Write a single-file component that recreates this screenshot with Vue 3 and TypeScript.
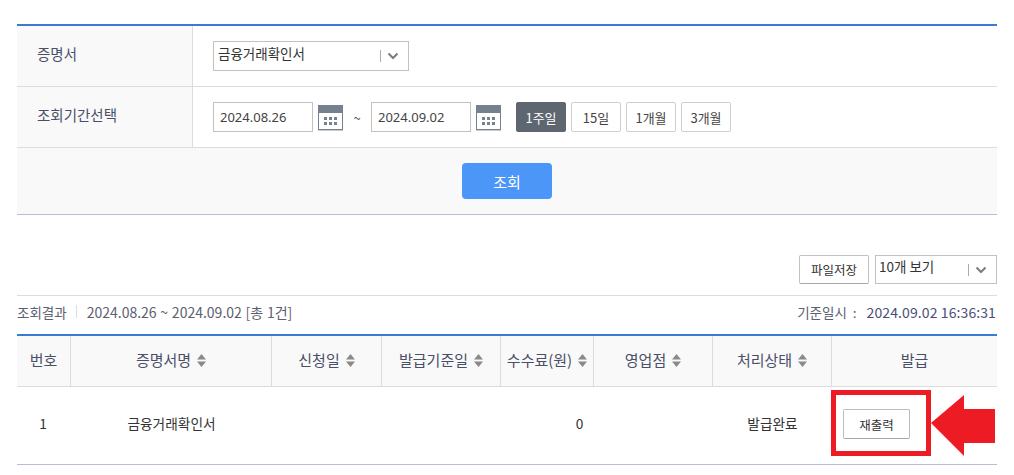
<script setup lang="ts">
interface Col { label: string; width: number; sort: boolean }
const cols: Col[] = [
  { label: '번호', width: 54, sort: false },
  { label: '증명서명', width: 201, sort: true },
  { label: '신청일', width: 110, sort: true },
  { label: '발급기준일', width: 119, sort: true },
  { label: '수수료(원)', width: 93, sort: true },
  { label: '영업점', width: 119, sort: true },
  { label: '처리상태', width: 119, sort: true },
  { label: '발급', width: 165, sort: false },
]
const periods = ['1주일', '15일', '1개월', '3개월']
</script>

<template>
  <main class="page">
    <section class="search">
      <div class="row">
        <div class="label">증명서</div>
        <div class="field">
          <div class="select cert"><span class="sel-text">금융거래확인서</span><i class="sep"></i>
            <svg class="chev" width="12" height="8" viewBox="0 0 12 8"><path d="M1.500 1.500 6 6l4.500-4.500" fill="none" stroke="#7d7d7d" stroke-width="2"/></svg>
          </div>
        </div>
      </div>
      <div class="row">
        <div class="label">조회기간선택</div>
        <div class="field">
          <div class="date">2024.08.26</div>
          <svg class="cal" width="25" height="25" viewBox="0 0 25 25"><rect x=".5" y=".5" width="24" height="24" fill="#fff" stroke="#76818f"/><rect width="25" height="8" fill="#76818f"/><path d="M6 12h3v3H6zm5 0h3v3h-3zm5 0h3v3h-3zM6 17h3v3H6zm5 0h3v3h-3zm5 0h3v3h-3z" fill="#76818f"/></svg>
          <span class="tilde">~</span>
          <div class="date">2024.09.02</div>
          <svg class="cal" width="25" height="25" viewBox="0 0 25 25"><rect x=".5" y=".5" width="24" height="24" fill="#fff" stroke="#76818f"/><rect width="25" height="8" fill="#76818f"/><path d="M6 12h3v3H6zm5 0h3v3h-3zm5 0h3v3h-3zM6 17h3v3H6zm5 0h3v3h-3zm5 0h3v3h-3z" fill="#76818f"/></svg>
          <div class="periods">
            <button v-for="(p, i) in periods" :key="p" class="period" :class="{ on: i === 0 }">{{ p }}</button>
          </div>
        </div>
      </div>
      <div class="foot"><button class="submit">조회</button></div>
    </section>

    <div class="tools">
      <button class="save">파일저장</button>
      <div class="select count"><span class="sel-text">10개 보기</span><i class="sep"></i>
        <svg class="chev" width="12" height="8" viewBox="0 0 12 8"><path d="M1.500 1.500 6 6l4.500-4.500" fill="none" stroke="#7d7d7d" stroke-width="2"/></svg>
      </div>
    </div>

    <div class="summary">
      <div class="sum-left"><span class="sum-title">조회결과</span><i class="sum-sep"></i><span class="range">2024.08.26 ~ 2024.09.02 [총 1건]</span></div>
      <div class="sum-right"><span class="sum-title when">기준일시 :</span><span class="stamp">2024.09.02 16:36:31</span></div>
    </div>

    <div class="table-wrap">
      <table>
        <colgroup><col v-for="c in cols" :key="c.label" :style="{ width: c.width + 'px' }" /></colgroup>
        <thead>
          <tr>
            <th v-for="c in cols" :key="c.label">{{ c.label }}<svg v-if="c.sort" class="sort" width="9" height="13" viewBox="0 0 9 13"><path d="M4.500 0 9 5.500H0zM0 7.500h9L4.500 13z" fill="#8a8a8a"/></svg></th>
          </tr>
        </thead>
        <tbody>
          <tr>
            <td class="num">1</td>
            <td>금융거래확인서</td>
            <td></td>
            <td></td>
            <td class="fee">0</td>
            <td></td>
            <td>발급완료</td>
            <td class="issue"><button class="reprint">재출력</button></td>
          </tr>
        </tbody>
      </table>
      <div class="mark"></div>
      <svg class="arrow" width="64" height="61" viewBox="0 0 64 61"><path d="M0 28 33 0v14h31v34H33v13z" fill="#ed1c24"/></svg>
    </div>
  </main>
</template>

<style>
body { margin: 0; background: #fff; }
</style>

<style scoped>
.page {
  width: 980px;
  margin-left: 17px;
  padding-top: 24px;
  font-family: "Noto Sans CJK KR", "Noto Sans", sans-serif;
  font-size: 13px;
  color: #333;
}
.search { border-top: 2px solid #3a7bd0; border-bottom: 1px solid #b8bdd6; }
.row { display: flex; height: 61px; border-bottom: 1px solid #dcdcdc; box-sizing: border-box; }
.label {
  width: 176px;
  box-sizing: border-box;
  padding: 0 0 6px 20px;
  display: flex;
  align-items: center;
  background: #f9f9f9;
  border-right: 1px solid #dcdcdc;
  color: #4a4f68;
  font-size: 14.5px;
}
.field { flex: 1; display: flex; align-items: center; padding-left: 20px; }
.select {
  display: flex;
  align-items: center;
  box-sizing: border-box;
  height: 30px;
  border: 1px solid #c2c2c2;
  background: #fff;
}
.cert { width: 196px; }
.count { width: 122px; }
.sel-text { flex: 1; padding: 0 0 7px 4px; font-size: 13.500px; color: #333; }
.count .sel-text { padding-left: 3px; }
.sep { width: 1px; height: 12px; background: #aaa; margin-right: 6px; }
.chev { margin-right: 9px; }
.date {
  box-sizing: border-box;
  width: 100px;
  height: 30px;
  border: 1px solid #c2c2c2;
  padding-left: 6px;
  display: flex;
  align-items: center;
  font-family: "Noto Sans", sans-serif;
  color: #444;
}
.cal { margin-left: 5px; filter: drop-shadow(0 1px 0 #ccc); }
.tilde { width: 28px; text-align: center; color: #555; }
.periods { display: flex; gap: 5px; margin-left: 15px; }
.period {
  box-sizing: border-box;
  width: 50px;
  height: 30px;
  padding: 0;
  background: #fff;
  border: 1px solid #cfcfcf;
  border-radius: 2px;
  font: inherit;
  color: #444;
}
.period.on { background: #5e6670; border-color: #5e6670; color: #fff; }
.foot { height: 66px; background: #f9f9f9; display: flex; justify-content: center; align-items: center; }
.submit {
  width: 90px;
  height: 36px;
  padding: 0;
  border: 0;
  border-radius: 4px;
  background: #4c96f7;
  color: #fff;
  font: inherit;
  font-size: 15px;
}
.tools { display: flex; justify-content: flex-end; gap: 6px; margin-top: 40px; height: 40px; border-bottom: 1px solid #dcdcdc; }
.save {
  box-sizing: border-box;
  width: 70px;
  height: 29px;
  padding: 0;
  background: #fff;
  border: 1px solid #c2c2c2;
  border-bottom-color: #a8a8a8;
  border-radius: 2px;
  font: inherit;
  font-size: 12.500px;
  color: #333;
}
.count { height: 29px; }
.summary {
  display: flex;
  justify-content: space-between;
  align-items: center;
  box-sizing: border-box;
  height: 38px;
  padding: 0 1px 7px 0;
  font-size: 14px;
  color: #5b6070;
}
.sum-left, .sum-right { display: flex; align-items: center; }
.sum-title { font-size: 13.500px; }
.when { word-spacing: 3px; }
.sum-sep { width: 1px; height: 13px; background: #ddd; margin: 0 10px 0 9px; }
.range { word-spacing: .6px; }
.stamp { margin-left: 10px; letter-spacing: .1px; color: #4a4f78; }
.table-wrap { position: relative; border-top: 2px solid #3a7bd0; border-bottom: 1px solid #b8bdd6; }
table { width: 980px; border-collapse: separate; border-spacing: 0; table-layout: fixed; }
th {
  box-sizing: border-box;
  height: 51px;
  padding: 0 0 3px;
  background: #f9f9f9;
  border-right: 1px solid #dcdcdc;
  border-bottom: 1px solid #dcdcdc;
  font-weight: 400;
  font-size: 15px;
  color: #4a4f68;
}
th:last-child { border-right: 0; }
.sort { margin-left: 6px; vertical-align: -1px; }
td { box-sizing: border-box; height: 77px; padding: 0 0 5px; text-align: center; color: #333; font-size: 13.700px; }
td.num { padding-right: 2px; }
td.fee { padding-left: 64px; }
td.issue { text-align: left; padding: 0 0 3px 11px; }
.reprint {
  display: block;
  box-sizing: border-box;
  width: 67px;
  height: 30px;
  padding: 0;
  background: #fff;
  border: 1px solid #bdbdbd;
  border-bottom-color: #a8a8a8;
  border-radius: 2px;
  font: inherit;
  font-size: 12.500px;
  color: #333;
}
.mark {
  position: absolute;
  left: 814px;
  top: 54px;
  box-sizing: border-box;
  width: 100px;
  height: 66px;
  border: 5px solid #ed1c24;
}
.arrow { position: absolute; left: 914px; top: 59px; }
</style>
